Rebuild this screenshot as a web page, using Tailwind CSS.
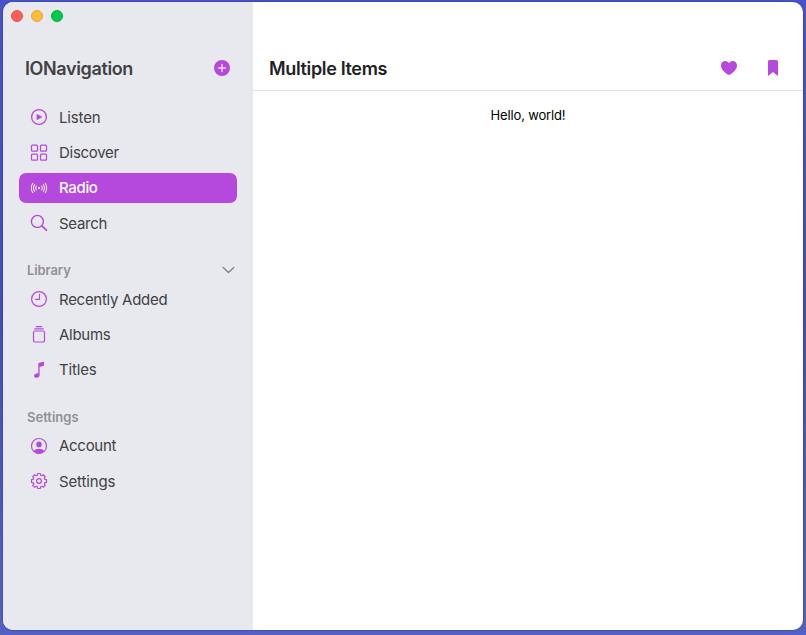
<!DOCTYPE html>
<html lang="en">
<head>
<meta charset="utf-8">
<title>IONavigation</title>
<script src="https://cdn.jsdelivr.net/npm/@tailwindcss/browser@4"></script>
</head>
<body class="h-[635px] w-[806px] overflow-hidden bg-linear-to-b from-[#4a52cc] via-[#454eba] to-[#5360c4] pt-[2px] pl-[3px] font-[Inter,sans-serif]">
<div class="flex h-[628px] w-[800px] overflow-hidden rounded-[10px] bg-white shadow-[0_0_2px_rgba(0,0,40,0.45)]">
  <aside class="flex w-[250px] flex-col bg-[#e8e9ee] pl-4 text-[#414144]">
    <div class="-ml-2 flex h-7 gap-2 pt-2">
      <span class="size-3 rounded-full border border-[#e9504a] bg-[#ff5f57]"></span>
      <span class="size-3 rounded-full border border-[#e5a532] bg-[#febc3c]"></span>
      <span class="size-3 rounded-full border border-[#00ad38] bg-[#00ca4e]"></span>
    </div>
    <div class="flex h-[72.5px] items-start justify-between pt-[26px] pr-[23px] pl-[6px]">
      <h1 class="text-[18px] leading-[26px] font-semibold tracking-[-0.37px] whitespace-nowrap">IONavigation</h1>
      <svg class="mt-[4px] size-4" viewBox="0 0 16 16"><circle cx="8" cy="8" r="8" fill="#b549dd"/><path d="M8 4.5v7M4.500 8h7" stroke="#ecd5f5" stroke-width="1.500" stroke-linecap="round"/></svg>
    </div>
    <nav class="flex w-[218px] flex-col gap-[5.3px] text-[15px] leading-[30px] tracking-[-0.28px]">
      <div class="flex h-[30px] items-center gap-[11px] pl-[11px]">
        <svg class="mb-[1px] size-[18px] shrink-0" viewBox="-9 -9 18 18" fill="none" stroke="#b549dd" stroke-width="1.3"><circle r="7.4"/><path d="M-2-2.6v5.2L2.8 0z" fill="#b549dd" stroke-width=".8" stroke-linejoin="round"/></svg>
        <span class="tracking-[-0.15px]">Listen</span>
      </div>
      <div class="flex h-[30px] items-center gap-[11px] pl-[11px]">
        <svg class="size-[18px] shrink-0" viewBox="0 0 18 18" fill="none" stroke="#b549dd" stroke-width="1.25"><rect x="1.5" y="1.1" width="6" height="6" rx=".9"/><rect x="10.5" y="1.1" width="6" height="6" rx=".9"/><rect x="1.5" y="10.1" width="6" height="6" rx=".9"/><rect x="10.5" y="10.1" width="6" height="6" rx=".9"/></svg>
        <span>Discover</span>
      </div>
      <div class="flex h-[30px] items-center gap-[11px] rounded-[7px] bg-[#b549dd] pl-[11px] font-medium tracking-[-0.35px] text-white">
        <svg class="size-[18px] shrink-0" viewBox="-9 -9 18 18" fill="none" stroke="#fff" stroke-width="1" stroke-linecap="round"><circle r="1.1" fill="#fff" stroke="none"/><path d="M-2.800-2q-1.400 2 0 4M2.800-2q1.400 2 0 4M-4.600-3.500q-2.200 3.500 0 7M4.600-3.500q2.200 3.500 0 7M-6.300-4.800q-2.900 4.800 0 9.600M6.300-4.800q2.900 4.800 0 9.600"/></svg>
        <span>Radio</span>
      </div>
      <div class="flex h-[30px] items-center gap-[11px] pl-[11px]">
        <svg class="size-[18px] shrink-0" viewBox="0 0 18 18" fill="none" stroke="#b549dd" stroke-width="1.4"><circle cx="7.4" cy="7.4" r="6"/><path d="M11.900 11.900l4.500 4.300" stroke-width="1.800" stroke-linecap="round"/></svg>
        <span class="pt-[2px]">Search</span>
      </div>
    </nav>
    <div class="flex h-[46px] w-[218px] items-end justify-between pr-[2px] pl-2">
      <h2 class="text-[13px] leading-[28px] font-semibold tracking-[-0.1px] text-[#909095]">Library</h2>
      <svg class="mb-[8px] h-3 w-[13px]" viewBox="0 0 13 12" fill="none" stroke="#858589" stroke-width="1.4" stroke-linecap="round" stroke-linejoin="round"><path d="M1.2 3.500l5.300 5 5.300-5"/></svg>
    </div>
    <nav class="flex w-[218px] flex-col gap-[5.3px] text-[15px] leading-[30px] tracking-[-0.28px]">
      <div class="flex h-[30px] items-center gap-[11px] pl-[11px]">
        <svg class="size-[18px] shrink-0" viewBox="-9 -9 18 18" fill="none" stroke="#b549dd" stroke-width="1.25"><circle cy="0" r="7.4"/><path d="M.5-5.200V.4H-3.800" stroke-width="1.100"/></svg>
        <span class="pt-[2px]">Recently Added</span>
      </div>
      <div class="flex h-[30px] items-center gap-[11px] pl-[11px]">
        <svg class="size-[18px] shrink-0" viewBox="0 0 18 18" fill="none" stroke="#b549dd" stroke-width="1.2" stroke-linecap="round"><path d="M6.300.700h5.400M4.800 2.900h8.400"/><rect x="3.500" y="5" width="11" height="11" rx="1.600"/></svg>
        <span>Albums</span>
      </div>
      <div class="flex h-[30px] items-center gap-[11px] pl-[11px]">
        <svg class="size-[18px] shrink-0" viewBox="0 0 18 18" fill="#b549dd"><path d="M8.300 3q0-1 1-1.300l4-1q.7-.1.7.6v2.800q0 .6-.6.8L9.600 6v7.700q0 3-3 3.100-2.600 0-2.600-1.900 0-1.600 1.900-2.100l2.400-.8z"/></svg>
        <span class="tracking-[-0.15px]">Titles</span>
      </div>
    </nav>
    <div class="flex h-[46px] items-end pl-2">
      <h2 class="text-[13px] leading-[28px] font-semibold text-[#909095]">Settings</h2>
    </div>
    <nav class="flex w-[218px] flex-col gap-[5.3px] text-[15px] leading-[30px] tracking-[-0.28px]">
      <div class="flex h-[30px] items-center gap-[11px] pl-[11px]">
        <svg class="size-[18px] shrink-0" viewBox="-9 -9 18 18"><circle r="7.5" fill="none" stroke="#b549dd" stroke-width="1.2"/><ellipse cy="-1.6" rx="2.7" ry="2.9" fill="#b549dd"/><path d="M-5.200 4.800Q-3.500 2.700 0 2.700T5.200 4.800Q3 7.500 0 7.500T-5.200 4.800z" fill="#b549dd"/></svg>
        <span>Account</span>
      </div>
      <div class="flex h-[30px] items-center gap-[11px] pl-[11px]">
        <svg class="size-[18px] shrink-0" viewBox="-9 -9 18 18" fill="none" stroke="#b549dd" stroke-width="1.2" stroke-linejoin="round"><circle r="2.4"/><path d="M5.77-1.65L7.48-1.32V1.32L5.77 1.65 5.25 2.91 6.22 4.36 4.36 6.22 2.91 5.25 1.65 5.77 1.32 7.48H-1.32L-1.65 5.77-2.91 5.25-4.36 6.22-6.22 4.36-5.25 2.91-5.77 1.65-7.48 1.32V-1.32L-5.77-1.65-5.25-2.91-6.22-4.36-4.36-6.22-2.91-5.25-1.65-5.77-1.32-7.48H1.32L1.65-5.77 2.91-5.25 4.36-6.22 6.22-4.36 5.25-2.91z"/></svg>
        <span class="pt-[2px] tracking-[-0.15px]">Settings</span>
      </div>
    </nav>
  </aside>
  <main class="flex flex-1 flex-col">
    <header class="flex h-[89px] items-end justify-between border-b border-[#e0e0e2] pr-[21px] pb-[8px] pl-4">
      <h1 class="text-[18px] leading-[26px] font-semibold tracking-[-0.35px] text-[#222226]">Multiple Items</h1>
      <div class="flex gap-[26px] pb-[5px]">
        <svg class="size-[18px]" viewBox="0 0 18 18" fill="#b549dd"><path d="M9 4.200C10 2.700 11.300 2 12.700 2 15.200 2 17 4 17 6.400c0 4.200-3.700 6.800-6.700 9q-1.300.9-2.600 0C4.700 13.200 1 10.600 1 6.400 1 4 2.800 2 5.300 2 6.700 2 8 2.700 9 4.200z"/></svg>
        <svg class="size-[18px]" viewBox="0 0 18 18" fill="#b549dd"><path d="M4 2.500Q4 1 5.500 1h7Q14 1 14 2.500V16.300q0 .8-.7.3L9 12.900l-4.300 3.700q-.7.5-.7-.3z"/></svg>
      </div>
    </header>
    <p class="pt-[14px] text-center text-[13px] leading-5 tracking-[-0.16px] text-black">Hello, world!</p>
  </main>
</div>
</body>
</html>
